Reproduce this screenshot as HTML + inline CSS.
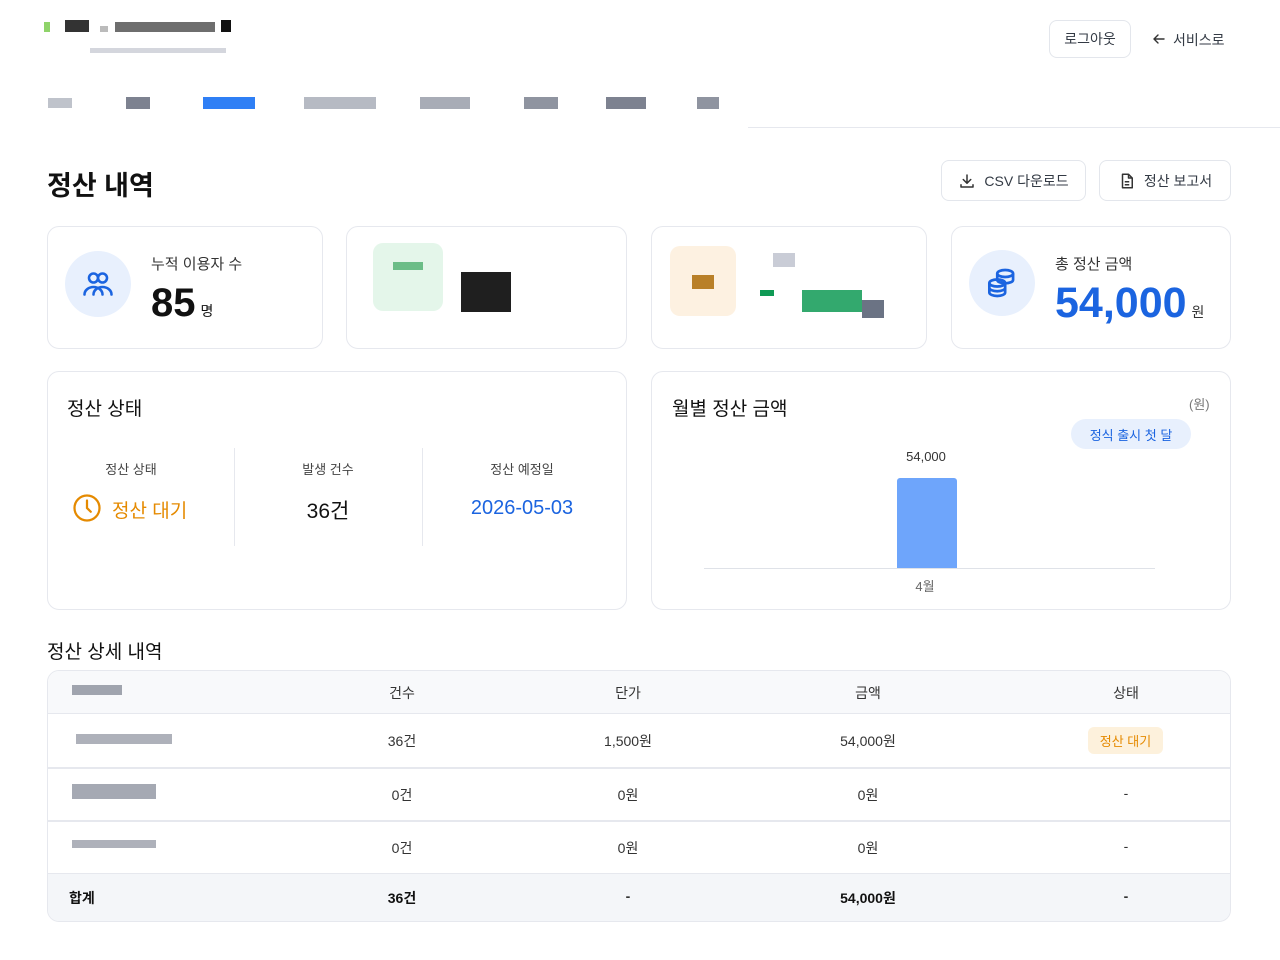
<!DOCTYPE html>
<html><head><meta charset="utf-8">
<style>
*{box-sizing:border-box;margin:0;padding:0}
body{width:1280px;height:960px;background:#fff;font-family:"Liberation Sans","Noto Sans CJK KR",sans-serif;color:#1f2329;position:relative;overflow:hidden}
.a{position:absolute}
.card{position:absolute;border:1.5px solid #e6e8ee;border-radius:12px;background:#fff}
.btn{position:absolute;border:1.5px solid #e3e6ec;border-radius:8px;background:#fff;font-size:14px;color:#333a44;display:flex;align-items:center;justify-content:center;gap:8px}
.px{position:absolute}
.c{position:absolute;transform:translateX(-50%);white-space:nowrap}
</style></head><body>
<div class="px" style="left:44px;top:22px;width:6px;height:10px;background:#8fd36a"></div>
<div class="px" style="left:65px;top:20px;width:24px;height:12px;background:#333"></div>
<div class="px" style="left:100px;top:26px;width:8px;height:6px;background:#bbb"></div>
<div class="px" style="left:115px;top:22px;width:100px;height:10px;background:#555;opacity:.85"></div>
<div class="px" style="left:221px;top:20px;width:10px;height:12px;background:#111"></div>
<div class="px" style="left:90px;top:48px;width:136px;height:5px;background:#c9ccd4;opacity:.8"></div>
<div class="px" style="left:48px;top:98px;width:24px;height:10px;background:#bfc3cb"></div>
<div class="px" style="left:126px;top:97px;width:24px;height:12px;background:#7d8290"></div>
<div class="px" style="left:203px;top:97px;width:52px;height:12px;background:#2f7ff5"></div>
<div class="px" style="left:304px;top:97px;width:72px;height:12px;background:#b6bac3"></div>
<div class="px" style="left:420px;top:97px;width:50px;height:12px;background:#a8acb6"></div>
<div class="px" style="left:524px;top:97px;width:34px;height:12px;background:#8f94a0"></div>
<div class="px" style="left:606px;top:97px;width:40px;height:12px;background:#7d8290"></div>
<div class="px" style="left:697px;top:97px;width:22px;height:12px;background:#8f94a0"></div>
<div class="px" style="left:748px;top:127px;width:532px;height:1px;background:#e6e8ee"></div>

<div class="btn" style="left:1049px;top:20px;width:82px;height:38px">로그아웃</div>
<svg class="a" style="left:1151px;top:31px" width="16" height="16" viewBox="0 0 16 16" fill="none" stroke="#333" stroke-width="1.4" stroke-linecap="round" stroke-linejoin="round"><path d="M13 8H3M7 4L3 8l4 4"/></svg>
<div class="a" style="left:1173px;top:30px;font-size:14px;color:#333a44">서비스로</div>

<div class="a" style="left:47px;top:164px;font-size:27px;font-weight:bold;color:#111">정산 내역</div>
<div class="btn" style="left:941px;top:160px;width:145px;height:41px">
<svg width="18" height="18" viewBox="0 0 24 24" fill="none" stroke="#333" stroke-width="2" stroke-linecap="round" stroke-linejoin="round"><path d="M12 4v11M7 10l5 5 5-5M4 17v3h16v-3"/></svg>CSV 다운로드</div>
<div class="btn" style="left:1099px;top:160px;width:132px;height:41px">
<svg width="18" height="18" viewBox="0 0 24 24" fill="none" stroke="#333" stroke-width="2" stroke-linejoin="round"><path d="M6 3h8l5 5v13H6z M14 3v5h5 M9 13h6M9 17h6"/></svg>정산 보고서</div>

<div class="card" style="left:47px;top:226px;width:276px;height:123px"></div>
<div class="a" style="left:65px;top:251px;width:66px;height:66px;border-radius:50%;background:#e8f0fd"></div>
<svg class="a" style="left:80px;top:266px" width="36" height="36" viewBox="0 0 24 24" fill="none" stroke="#1b64e0" stroke-width="1.7" stroke-linecap="round"><circle cx="9" cy="8" r="3"/><circle cx="15" cy="8" r="3"/><path d="M3 19c0-3 3-5 6-5s6 2 6 5M9 19c0-3 3-5 6-5s6 2 6 5"/></svg>
<div class="a" style="left:151px;top:253px;font-size:15px;color:#333">누적 이용자 수</div>
<div class="a" style="left:151px;top:281px;font-size:40px;font-weight:bold;color:#111">85<span style="font-size:14px;font-weight:normal;margin-left:5px">명</span></div>

<div class="card" style="left:346px;top:226px;width:281px;height:123px"></div>
<div class="px" style="left:373px;top:243px;width:70px;height:68px;background:#e4f6ea;border-radius:10px"></div>
<div class="px" style="left:393px;top:262px;width:30px;height:8px;background:#6bbd87"></div>
<div class="px" style="left:461px;top:272px;width:50px;height:40px;background:#1f1f1f"></div>
<div class="card" style="left:651px;top:226px;width:276px;height:123px"></div>
<div class="px" style="left:670px;top:246px;width:66px;height:70px;background:#fdf1e1;border-radius:10px"></div>
<div class="px" style="left:692px;top:275px;width:22px;height:14px;background:#b98028"></div>
<div class="px" style="left:773px;top:253px;width:22px;height:14px;background:#c9ccd6"></div>
<div class="px" style="left:760px;top:290px;width:14px;height:6px;background:#0f9a55"></div>
<div class="px" style="left:802px;top:290px;width:60px;height:22px;background:#0f9a55;opacity:.85"></div>
<div class="px" style="left:862px;top:300px;width:22px;height:18px;background:#6b7384"></div>

<div class="card" style="left:951px;top:226px;width:280px;height:123px"></div>
<div class="a" style="left:969px;top:250px;width:66px;height:66px;border-radius:50%;background:#e8f0fd"></div>
<svg class="a" style="left:983px;top:264px" width="38" height="38" viewBox="0 0 24 24" fill="none" stroke="#1b64e0" stroke-width="1.7"><ellipse cx="14" cy="6" rx="5" ry="2.2"/><path d="M9 6v4c0 1.2 2.2 2.2 5 2.2s5-1 5-2.2V6"/><ellipse cx="9" cy="12" rx="5" ry="2.2"/><path d="M4 12v6c0 1.2 2.2 2.2 5 2.2s5-1 5-2.2v-6M4 15c0 1.2 2.2 2.2 5 2.2s5-1 5-2.2"/></svg>
<div class="a" style="left:1055px;top:253px;font-size:15px;color:#333">총 정산 금액</div>
<div class="a" style="left:1055px;top:279px;font-size:43px;font-weight:bold;color:#1b64e0">54,000<span style="font-size:14px;font-weight:normal;color:#333;margin-left:5px">원</span></div>

<div class="card" style="left:47px;top:371px;width:580px;height:239px"></div>
<div class="a" style="left:67px;top:394px;font-size:19px;color:#111">정산 상태</div>
<div class="a" style="left:234px;top:448px;width:1px;height:98px;background:#e6e8ee"></div>
<div class="a" style="left:422px;top:448px;width:1px;height:98px;background:#e6e8ee"></div>
<div class="c" style="left:131px;top:459px;font-size:13px;color:#444">정산 상태</div>
<div class="c" style="left:328px;top:459px;font-size:13px;color:#444">발생 건수</div>
<div class="c" style="left:522px;top:459px;font-size:13px;color:#444">정산 예정일</div>
<svg class="a" style="left:72px;top:493px" width="30" height="30" viewBox="0 0 24 24" fill="none" stroke="#e58a00" stroke-width="1.8" stroke-linecap="round"><circle cx="12" cy="12" r="10"/><path d="M12 6v6l3 3"/></svg>
<div class="a" style="left:112px;top:496px;font-size:19px;color:#e58a00">정산 대기</div>
<div class="c" style="left:328px;top:495px;font-size:21px;color:#111">36건</div>
<div class="c" style="left:522px;top:497px;font-size:20px;color:#1b64e0">2026-05-03</div>

<div class="card" style="left:651px;top:371px;width:580px;height:239px"></div>
<div class="a" style="left:672px;top:394px;font-size:19px;color:#111">월별 정산 금액</div>
<div class="a" style="left:1189px;top:394px;font-size:13px;color:#777">(원)</div>
<div class="a" style="left:1071px;top:419px;width:120px;height:30px;border-radius:15px;background:#e8f0fd;color:#1b64e0;font-size:13px;display:flex;align-items:center;justify-content:center">정식 출시 첫 달</div>
<div class="c" style="left:926px;top:449px;font-size:13px;color:#333">54,000</div>
<div class="a" style="left:897px;top:478px;width:60px;height:90px;background:#6ea5fb;border-radius:3px 3px 0 0"></div>
<div class="a" style="left:704px;top:568px;width:451px;height:1px;background:#dfe2e8"></div>
<div class="c" style="left:925px;top:576px;font-size:13px;color:#666">4월</div>

<div class="a" style="left:47px;top:637px;font-size:19px;color:#111">정산 상세 내역</div>
<div class="card" style="left:47px;top:670px;width:1184px;height:252px;overflow:hidden">
<div class="a" style="left:0;top:0;width:100%;height:43px;background:#f8f9fb;border-bottom:1.5px solid #e6e8ee"></div>
<div class="a" style="left:0;top:96px;width:100%;height:1.5px;background:#e6e8ee"></div>
<div class="a" style="left:0;top:149px;width:100%;height:1.5px;background:#e6e8ee"></div>
<div class="a" style="left:0;top:202px;width:100%;height:50px;background:#f4f6f9;border-top:1.5px solid #e6e8ee"></div>
</div>
<div class="px" style="left:72px;top:685px;width:50px;height:10px;background:#8a8f9b;opacity:.8"></div>
<div class="px" style="left:76px;top:734px;width:96px;height:10px;background:#9a9ea9;opacity:.8"></div>
<div class="px" style="left:72px;top:784px;width:84px;height:15px;background:#8f94a0;opacity:.8"></div>
<div class="px" style="left:72px;top:840px;width:84px;height:8px;background:#9a9ea9;opacity:.8"></div>
<div style="font-size:14px;color:#333">
<div class="c" style="left:402px;top:683px">건수</div>
<div class="c" style="left:628px;top:683px">단가</div>
<div class="c" style="left:868px;top:683px">금액</div>
<div class="c" style="left:1126px;top:683px">상태</div>
<div class="c" style="left:402px;top:731px">36건</div>
<div class="c" style="left:628px;top:731px">1,500원</div>
<div class="c" style="left:868px;top:731px">54,000원</div>
<div class="a" style="left:1088px;top:727px;width:75px;height:27px;border-radius:6px;background:#fdf1dc;color:#e58a00;font-size:13px;display:flex;align-items:center;justify-content:center">정산 대기</div>
<div class="c" style="left:402px;top:785px">0건</div>
<div class="c" style="left:628px;top:785px">0원</div>
<div class="c" style="left:868px;top:785px">0원</div>
<div class="c" style="left:1126px;top:785px">-</div>
<div class="c" style="left:402px;top:838px">0건</div>
<div class="c" style="left:628px;top:838px">0원</div>
<div class="c" style="left:868px;top:838px">0원</div>
<div class="c" style="left:1126px;top:838px">-</div>
<div class="a" style="left:69px;top:888px;font-weight:bold;color:#111">합계</div>
<div class="c" style="left:402px;top:888px;font-weight:bold;color:#111">36건</div>
<div class="c" style="left:628px;top:888px;font-weight:bold">-</div>
<div class="c" style="left:868px;top:888px;font-weight:bold;color:#111">54,000원</div>
<div class="c" style="left:1126px;top:888px;font-weight:bold">-</div>
</div>
</body></html>
